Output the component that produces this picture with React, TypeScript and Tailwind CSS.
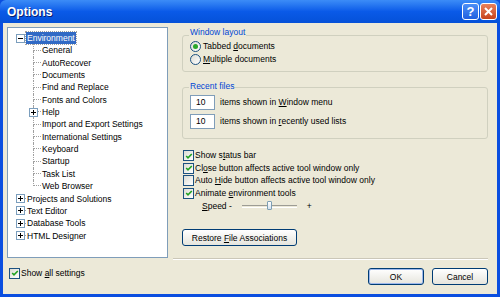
import React from "react";

const font = { fontFamily: '"Liberation Sans", Arial, sans-serif' };

function Check({ checked }: { checked: boolean }) {
  return (
    <div className="w-[11px] h-[11px] border border-[#1c5180] bg-gradient-to-br from-[#dcdcd4] to-white flex items-center justify-center shrink-0">
      {checked && (
        <svg width="8" height="8" viewBox="0 0 8 8">
          <path d="M1.2 4 L3 5.8 L6.8 2" stroke="#21a121" strokeWidth="1.6" fill="none" />
        </svg>
      )}
    </div>
  );
}

function Radio({ checked }: { checked: boolean }) {
  return (
    <div className="w-[11px] h-[11px] rounded-full border border-[#1c5180] bg-gradient-to-br from-[#dcdcd4] to-white flex items-center justify-center shrink-0">
      {checked && <div className="w-[5px] h-[5px] rounded-full bg-[#2aa72a]" />}
    </div>
  );
}

function PlusMinus({ minus }: { minus?: boolean }) {
  return (
    <div className="w-[9px] h-[9px] border border-[#7b9ebd] bg-white flex items-center justify-center shrink-0 relative">
      <div className="w-[5px] h-[1px] bg-black absolute" />
      {!minus && <div className="w-[1px] h-[5px] bg-black absolute" />}
    </div>
  );
}

function ChildRow({ label, last, plus }: { label: string; last?: boolean; plus?: boolean }) {
  return (
    <div className="flex h-[12.35px] items-stretch">
      <div className="w-[25px] shrink-0" />
      <div className="w-[8px] shrink-0 flex flex-col relative">
        <div className="h-1/2 border-l border-b border-dotted border-[#a0a0a0]" />
        {!last && <div className="h-1/2 border-l border-dotted border-[#a0a0a0]" />}
        {plus && (
          <div className="absolute left-[-4px] top-[2px]">
            <PlusMinus />
          </div>
        )}
      </div>
      <span className="pl-[1px] leading-[12.35px]">{label}</span>
    </div>
  );
}

function TopRow({ label, minus, selected }: { label: string; minus?: boolean; selected?: boolean }) {
  return (
    <div className="flex h-[12.35px] items-center">
      <div className="w-[8px] shrink-0" />
      <PlusMinus minus={minus} />
      <div className="w-[1px] h-0 border-b border-dotted border-[#a0a0a0]" />
      <span
        className={
          "leading-[12px] px-[1px] " +
          (selected ? "bg-[#316ac5] text-white outline outline-1 outline-dotted outline-[#a0a0a0]" : "")
        }
      >
        {label}
      </span>
    </div>
  );
}

function U({ children }: { children: React.ReactNode }) {
  return <span className="underline underline-offset-1">{children}</span>;
}

function XPButton({ children, w, def }: { children: React.ReactNode; w: string; def?: boolean }) {
  return (
    <div
      className={
        w +
        " h-[17px] rounded-[3px] border border-[#003c74] bg-gradient-to-b from-white to-[#e6e5dd] flex items-center justify-center text-black " +
        (def ? "shadow-[inset_0_0_0_1px_#9db8ec]" : "")
      }
    >
      <span>{children}</span>
    </div>
  );
}

export default function App() {
  return (
    <div
      className="w-[500px] h-[297px] bg-[#0a4ee0] flex flex-col text-[8.5px] text-black overflow-hidden"
      style={font}
    >
      {/* Title bar */}
      <div className="h-[23px] shrink-0 bg-gradient-to-b from-[#3c8cf7] via-[#0a5ae8] to-[#0551d8] flex items-center justify-between px-[3px] rounded-t-[6px]">
        <span className="text-white font-bold text-[12px] pl-[4px] [text-shadow:1px_1px_0_#0a1e6e]">Options</span>
        <div className="flex gap-[1px] items-center">
          <div className="w-[17px] h-[17px] rounded-[3px] border border-white bg-gradient-to-b from-[#4d8ff6] to-[#1f5fe0] flex items-center justify-center text-white font-bold text-[13px] leading-none">
            ?
          </div>
          <div className="w-[17px] h-[17px] rounded-[3px] border border-white bg-gradient-to-b from-[#e8815b] to-[#c6421b] flex items-center justify-center">
            <svg width="9" height="9" viewBox="0 0 9 9">
              <path d="M1 1 L8 8 M8 1 L1 8" stroke="white" strokeWidth="2" />
            </svg>
          </div>
        </div>
      </div>

      {/* Client */}
      <div className="flex-1 mx-[3px] mb-[3px] bg-[#ece9d8] flex">
        {/* Left */}
        <div className="w-[170px] shrink-0 flex flex-col pl-[4px] pt-[4px]">
          <div className="w-[161px] h-[231px] bg-white border border-[#7f9db9] pt-[4px]">
            <TopRow label="Environment" minus selected />
            <ChildRow label="General" />
            <ChildRow label="AutoRecover" />
            <ChildRow label="Documents" />
            <ChildRow label="Find and Replace" />
            <ChildRow label="Fonts and Colors" />
            <ChildRow label="Help" plus />
            <ChildRow label="Import and Export Settings" />
            <ChildRow label="International Settings" />
            <ChildRow label="Keyboard" />
            <ChildRow label="Startup" />
            <ChildRow label="Task List" />
            <ChildRow label="Web Browser" last />
            <TopRow label="Projects and Solutions" />
            <TopRow label="Text Editor" />
            <TopRow label="Database Tools" />
            <TopRow label="HTML Designer" />
          </div>
          <div className="flex items-center gap-[1px] mt-[9px] pl-[2px]">
            <Check checked />
            <span>
              Show <U>a</U>ll settings
            </span>
          </div>
        </div>

        {/* Right */}
        <div className="flex-1 flex flex-col pr-[9px]">
          <div className="pl-[9px] pt-[12px] flex flex-col">
            {/* Window layout */}
            <div className="h-[37px] border border-[#d0d0bf] rounded-[3px] relative flex flex-col pl-[7px] pt-[5px] gap-[2px]">
              <span className="absolute top-[-9px] left-[6px] px-[1px] bg-[#ece9d8] text-[#0046d5] leading-[11px]">Window layout</span>
              <div className="flex items-center gap-[2px] h-[11px]">
                <Radio checked />
                <span>
                  Tabbed <U>d</U>ocuments
                </span>
              </div>
              <div className="flex items-center gap-[2px] h-[11px]">
                <Radio checked={false} />
                <span>
                  <U>M</U>ultiple documents
                </span>
              </div>
            </div>

            {/* Recent files */}
            <div className="h-[52px] border border-[#d0d0bf] rounded-[3px] mt-[15px] relative flex flex-col pl-[7px] pt-[7px] gap-[4px]">
              <span className="absolute top-[-7px] left-[6px] px-[1px] bg-[#ece9d8] text-[#0046d5] leading-[11px]">Recent files</span>
              <div className="flex items-center gap-[5px]">
                <div className="w-[25px] h-[15px] bg-white border border-[#7f9db9] flex items-center pl-[5px]">10</div>
                <span>
                  items shown in <U>W</U>indow menu
                </span>
              </div>
              <div className="flex items-center gap-[5px]">
                <div className="w-[25px] h-[15px] bg-white border border-[#7f9db9] flex items-center pl-[5px]">10</div>
                <span>
                  items shown in <U>r</U>ecently used lists
                </span>
              </div>
            </div>
          </div>

          {/* Checkboxes */}
          <div className="flex flex-col pl-[10px] mt-[11px] gap-[1.6px]">
            <div className="flex items-center gap-[1px] h-[11px]">
              <Check checked />
              <span>
                Show s<U>t</U>atus bar
              </span>
            </div>
            <div className="flex items-center gap-[1px] h-[11px]">
              <Check checked />
              <span>
                Cl<U>o</U>se button affects active tool window only
              </span>
            </div>
            <div className="flex items-center gap-[1px] h-[11px]">
              <Check checked={false} />
              <span>
                Auto <U>H</U>ide button affects active tool window only
              </span>
            </div>
            <div className="flex items-center gap-[1px] h-[11px]">
              <Check checked />
              <span>
                Animate <U>e</U>nvironment tools
              </span>
            </div>
            <div className="flex items-center h-[12px] pl-[19px]">
              <span>
                <U>S</U>peed -
              </span>
              <div className="ml-[10px] w-[55px] h-[3px] border-t border-[#9d9c95] border-b border-b-white relative flex items-center">
                <div className="absolute left-[25px] top-[-5px] w-[5px] h-[9px] rounded-[1px] border border-[#7d9fb5] bg-gradient-to-b from-white to-[#d5e2ee]" />
              </div>
              <span className="ml-[10px]">+</span>
            </div>
          </div>

          <div className="pl-[9px] mt-[17px]">
            <XPButton w="w-[115px]">
              Restore <U>F</U>ile Associations
            </XPButton>
          </div>

          <div className="mt-[12px] h-[2px] border-t border-[#cbc7b8] border-b border-b-white" />

          <div className="flex justify-end gap-[8px] mt-[8px]">
            <XPButton w="w-[56px]" def>
              OK
            </XPButton>
            <XPButton w="w-[56px]">Cancel</XPButton>
          </div>
        </div>
      </div>
    </div>
  );
}
